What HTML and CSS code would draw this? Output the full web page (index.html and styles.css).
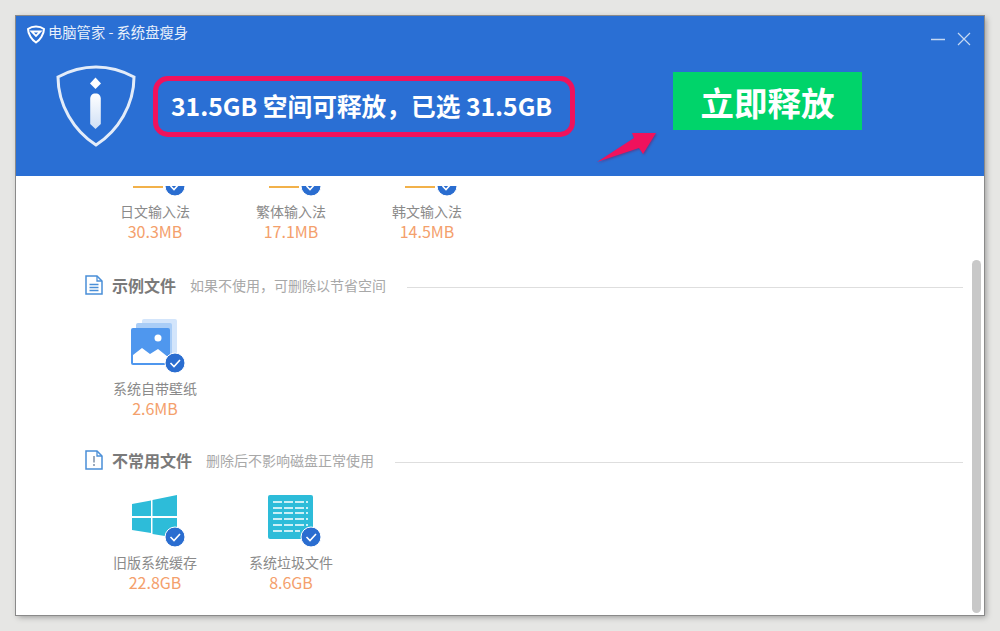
FILE: index.html
```html
<!DOCTYPE html>
<html lang="zh-CN">
<head>
  <meta charset="UTF-8" />
  <title>电脑管家 - 系统盘瘦身</title>
  <link rel="stylesheet" href="styles.css">
</head>
<body>
  <div class="window">
    <div class="header">
      <div class="titlebar">
        <svg class="logo" width="18" height="19" viewBox="0 0 18 19">
          <path d="M9 1.500C12 1.500 15 2.500 17 4C17 9 13 15 9 17.500C5 15 1 9 1 4C3 2.500 6 1.500 9 1.500Z" fill="none" stroke="#fff" stroke-width="2"/>
          <path d="M4.500 6.500H13.500L9 11Z" fill="none" stroke="#fff" stroke-width="1.800"/>
        </svg>
        <span class="title">电脑管家 - 系统盘瘦身</span>
        <div class="controls">
          <svg width="40" height="14" viewBox="0 0 40 14">
            <path d="M0 7.500H14" stroke="#c6d8f2" stroke-width="1.500"/>
            <path d="M27 1L39 13M39 1L27 13" stroke="#c6d8f2" stroke-width="1.200"/>
          </svg>
        </div>
      </div>
      <div class="banner">
        <svg class="shield" width="80" height="82" viewBox="0 0 80 82">
          <defs>
            <linearGradient id="barFill" x1="0" y1="0" x2="0" y2="1">
              <stop offset="0" stop-color="#fff"/>
              <stop offset="1" stop-color="#cfdff5"/>
            </linearGradient>
          </defs>
          <path d="M40 2C52 2 67 6 78 12C78 40 62 66 40 80C18 66 2 40 2 12C13 6 28 2 40 2Z" fill="none" stroke="#e3ecf9" stroke-width="3"/>
          <path d="M39.500 12.500L45 18.500L39.500 24L34 18.500Z" fill="#fff"/>
          <path d="M39.500 28.500C43 28.500 44.800 30.500 44.800 34V59L39.500 64L34.200 59V34C34.200 30.500 36 28.500 39.500 28.500Z" fill="url(#barFill)"/>
        </svg>
        <div class="summary">31.5GB 空间可释放，已选 31.5GB</div>
        <button class="release">立即释放</button>
      </div>
      <svg class="arrow" width="62" height="32" viewBox="0 0 62 32">
        <polygon points="1,30 38,6 36,1 60,1 47,22 43,16" fill="#f0125c"/>
      </svg>
    </div>

    <div class="content">
      <div class="items first-row">
        <div class="item">
          <svg class="icon" width="60" height="56" viewBox="0 0 60 56">
            <path d="M8 46H38" stroke="#f2b14a" stroke-width="2"/>
            <circle cx="50" cy="45" r="10" fill="#2a6dd0" stroke="#fff"/>
            <path d="M45.500 45L49 48.500L55 42" fill="none" stroke="#fff" stroke-width="1.600"/>
          </svg>
          <div class="name">日文输入法</div>
          <div class="size">30.3MB</div>
        </div>
        <div class="item">
          <svg class="icon" width="60" height="56" viewBox="0 0 60 56">
            <path d="M8 46H38" stroke="#f2b14a" stroke-width="2"/>
            <circle cx="50" cy="45" r="10" fill="#2a6dd0" stroke="#fff"/>
            <path d="M45.500 45L49 48.500L55 42" fill="none" stroke="#fff" stroke-width="1.600"/>
          </svg>
          <div class="name">繁体输入法</div>
          <div class="size">17.1MB</div>
        </div>
        <div class="item">
          <svg class="icon" width="60" height="56" viewBox="0 0 60 56">
            <path d="M8 46H38" stroke="#f2b14a" stroke-width="2"/>
            <circle cx="50" cy="45" r="10" fill="#2a6dd0" stroke="#fff"/>
            <path d="M45.500 45L49 48.500L55 42" fill="none" stroke="#fff" stroke-width="1.600"/>
          </svg>
          <div class="name">韩文输入法</div>
          <div class="size">14.5MB</div>
        </div>
      </div>

      <div class="section-head">
        <svg width="18" height="20" viewBox="0 0 18 20">
          <path d="M1 1H12L17 6V19H1Z" fill="none" stroke="#4a8fd8" stroke-width="1.500"/>
          <path d="M12 1V6H17M4.500 9.500H13.500M4.500 12.500H13.500M4.500 15.500H13.500" fill="none" stroke="#4a8fd8" stroke-width="1.300"/>
        </svg>
        <span class="section-title">示例文件</span>
        <span class="section-note">如果不使用，可删除以节省空间</span>
        <span class="section-line"></span>
      </div>
      <div class="items">
        <div class="item">
          <svg class="icon" width="60" height="56" viewBox="0 0 60 56">
            <rect x="17" y="1" width="35" height="38" rx="2" fill="#d3e5fb"/>
            <rect x="11" y="5" width="36" height="39" rx="2" fill="#a9cdf7"/>
            <rect x="6" y="10" width="39" height="37" rx="2" fill="#4f97ee"/>
            <circle cx="33" cy="20" r="3.500" fill="#fff"/>
            <path d="M8 45V37L17 30L25 36L33 31L43 39V45Z" fill="#fff"/>
            <circle cx="50" cy="45" r="10" fill="#2a6dd0" stroke="#fff"/>
            <path d="M45.500 45L49 48.500L55 42" fill="none" stroke="#fff" stroke-width="1.600"/>
          </svg>
          <div class="name">系统自带壁纸</div>
          <div class="size">2.6MB</div>
        </div>
      </div>

      <div class="section-head section-rare">
        <svg width="18" height="20" viewBox="0 0 18 20">
          <path d="M1 1H12L17 6V19H1Z" fill="none" stroke="#4a8fd8" stroke-width="1.500"/>
          <path d="M12 1V6H17" fill="none" stroke="#4a8fd8" stroke-width="1.300"/>
          <path d="M9 6V12.500M9 14V16" stroke="#6a7f99" stroke-width="1.300"/>
        </svg>
        <span class="section-title">不常用文件</span>
        <span class="section-note">删除后不影响磁盘正常使用</span>
        <span class="section-line"></span>
      </div>
      <div class="items">
        <div class="item">
          <svg class="icon" width="60" height="56" viewBox="0 0 60 56">
            <path d="M7 12L26 8.500V24H7ZM27.500 8L52 3V24H27.500ZM7 26H26V41L7 38ZM27.500 26H52V46L27.500 42Z" fill="#2dbcd9"/>
            <circle cx="50" cy="45" r="10" fill="#2a6dd0" stroke="#fff"/>
            <path d="M45.500 45L49 48.500L55 42" fill="none" stroke="#fff" stroke-width="1.600"/>
          </svg>
          <div class="name">旧版系统缓存</div>
          <div class="size">22.8GB</div>
        </div>
        <div class="item">
          <svg class="icon" width="60" height="56" viewBox="0 0 60 56">
            <rect x="7" y="3" width="45" height="44" rx="2" fill="#2dbcd9"/>
            <path d="M12 10H47M12 16H47M12 21H47M12 27H47M12 33H47M12 39H39" stroke="#fff" stroke-width="1.500" stroke-dasharray="9 2"/>
            <circle cx="50" cy="45" r="10" fill="#2a6dd0" stroke="#fff"/>
            <path d="M45.500 45L49 48.500L55 42" fill="none" stroke="#fff" stroke-width="1.600"/>
          </svg>
          <div class="name">系统垃圾文件</div>
          <div class="size">8.6GB</div>
        </div>
      </div>
    </div>
    <div class="scrollbar"></div>
  </div>
</body>
</html>
```

FILE: styles.css
```css
* {
  box-sizing: border-box;
}
html, body {
  height: 100%;
}
body {
  margin: 0;
  padding: 16px;
  background-color: #e6e6e4;
  font-family: "Noto Sans CJK SC", "Noto Sans", sans-serif;
  overflow: hidden;
}
.window {
  position: relative;
  height: 599px;
  background: #fff;
  display: flex;
  flex-direction: column;
  box-shadow: 0 0 0 1px #8a8a8a, 2px 2px 6px rgba(0,0,0,0.35);
}
.header {
  position: relative;
  height: 160px;
  flex: none;
  background-color: #2a6fd4;
  color: #fff;
}
.titlebar {
  height: 32px;
  padding: 7px 13px 0 11px;
  display: flex;
  align-items: flex-start;
}
.logo {
  margin-top: 2px;
}
.title {
  margin-left: 3px;
  font-size: 14.300px;
  line-height: 17px;
  color: #e8f0fb;
}
.controls {
  margin-left: auto;
  margin-top: 4px;
}
.banner {
  display: flex;
  align-items: flex-start;
  padding-left: 40px;
}
.shield {
  margin-top: 17px;
}
.summary {
  width: 422px;
  height: 61px;
  margin: 28px 0 0 17px;
  border: 5px solid #f0125c;
  border-radius: 15px;
  padding-left: 13px;
  font-size: 24.700px;
  font-weight: 700;
  line-height: 49px;
  white-space: nowrap;
}
.release {
  width: 189px;
  height: 58px;
  margin: 24px 0 0 98px;
  border: none;
  background-color: #00d46a;
  color: #fff;
  font-family: inherit;
  font-size: 33.500px;
  font-weight: 700;
  cursor: pointer;
}
.arrow {
  position: absolute;
  left: 580px;
  top: 116px;
  filter: drop-shadow(1px 1px 1px rgba(120,20,80,0.5));
}
.content {
  flex: 1;
  margin-top: 10px;
  padding-left: 69px;
  padding-right: 21px;
  overflow: hidden;
}
.items {
  display: flex;
  padding-left: 2px;
}
.item {
  width: 136px;
  text-align: center;
}
.icon {
  display: block;
  margin: 0 auto;
}
.name {
  margin-top: 4px;
  font-size: 14px;
  line-height: 21px;
  color: #8a8a8a;
}
.size {
  font-size: 16px;
  line-height: 19px;
  color: #f4a06c;
}
.first-row {
  margin-top: -45px;
}
.section-head {
  display: flex;
  align-items: center;
  height: 20px;
  margin-top: 34px;
  margin-bottom: 23px;
}
.section-rare {
  margin-top: 32px;
  margin-bottom: 22px;
}
.section-title {
  margin-left: 9px;
  font-size: 16px;
  font-weight: 700;
  color: #7a7a7a;
}
.section-note {
  margin-left: 14px;
  font-size: 14px;
  color: #a8a8a8;
}
.section-line {
  flex: 1;
  height: 1px;
  margin-top: 4px;
  margin-left: 21px;
  background-color: #dedede;
}
.scrollbar {
  position: absolute;
  right: 3px;
  top: 244px;
  bottom: 2px;
  width: 9px;
  border-radius: 5px;
  background-color: #c8c8c8;
}
```
